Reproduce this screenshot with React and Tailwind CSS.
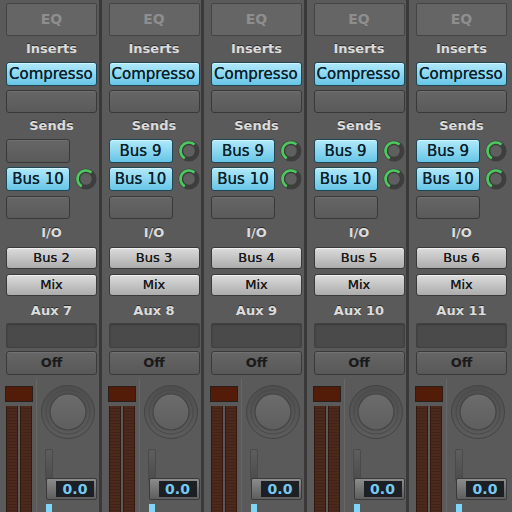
import React from "react";

const STRIPS = [
  { sends: [null, "Bus 10"], io: "Bus 2", aux: "Aux 7" },
  { sends: ["Bus 9", "Bus 10"], io: "Bus 3", aux: "Aux 8" },
  { sends: ["Bus 9", "Bus 10"], io: "Bus 4", aux: "Aux 9" },
  { sends: ["Bus 9", "Bus 10"], io: "Bus 5", aux: "Aux 10" },
  { sends: ["Bus 9", "Bus 10"], io: "Bus 6", aux: "Aux 11" },
];

const font = { fontFamily: '"DejaVu Sans", "Liberation Sans", sans-serif' };

function Label({ children, h }) {
  return (
    <div
      className={`flex items-center justify-center font-bold text-[13px] text-[#dcdcdc] [text-shadow:0_-1px_0_#2e2e2e] ${h}`}
    >
      {children}
    </div>
  );
}

function EmptySlot({ className = "" }) {
  return (
    <div
      className={`rounded-[3px] border border-[#383838] bg-linear-to-b from-[#666666] to-[#5a5a5a] shadow-[inset_0_1px_0_#707070] ${className}`}
    />
  );
}

function CyanSlot({ children, className = "", size = "text-[15px]" }) {
  return (
    <div
      className={`flex items-center justify-center overflow-hidden whitespace-nowrap rounded-[3px] border border-[#1e4756] bg-linear-to-b from-[#b0e9fa] to-[#66c5e6] shadow-[inset_0_1px_0_#d4f4ff] text-[#0b212b] [text-shadow:0_0_0.4px_#0b212b] ${size} ${className}`}
    >
      {children}
    </div>
  );
}

function GrayButton({ children, className = "" }) {
  return (
    <div
      className={`flex items-center justify-center rounded-[3px] border border-[#3a3a3a] bg-linear-to-b from-[#dcdcdc] to-[#acacac] text-[13px] text-[#1a1a1a] [text-shadow:0_0_0.4px_#1a1a1a] shadow-[inset_0_1px_0_#f0f0f0] ${className}`}
    >
      {children}
    </div>
  );
}

function SendKnob() {
  return (
    <svg width="22" height="22" viewBox="0 0 22 22">
      <circle cx="11" cy="11" r="10.5" fill="#3e3e3e" />
      <circle cx="11" cy="11" r="6.3" fill="#5f5f5f" stroke="#353535" strokeWidth="0.8" />
      <path
        d="M6.75 18.36 A8.5 8.5 0 1 1 16.46 4.49"
        fill="none"
        stroke="#4cc95e"
        strokeWidth="2.6"
      />
    </svg>
  );
}

function BigKnob() {
  return (
    <svg width="54" height="54" viewBox="0 0 54 54">
      <defs>
        <linearGradient id="ring" x1="0" y1="0" x2="0" y2="1">
          <stop offset="0" stopColor="#4e4e4e" />
          <stop offset="1" stopColor="#5c5c5c" />
        </linearGradient>
        <linearGradient id="cap" x1="0" y1="0" x2="0" y2="1">
          <stop offset="0" stopColor="#6c6c6c" />
          <stop offset="1" stopColor="#5e5e5e" />
        </linearGradient>
      </defs>
      <circle cx="27" cy="27" r="26.5" fill="url(#ring)" stroke="#444" strokeWidth="1" />
      <circle cx="27" cy="27" r="22" fill="none" stroke="#4a4a4a" strokeWidth="1" />
      <circle cx="27" cy="27" r="18" fill="url(#cap)" stroke="#444" strokeWidth="1.2" />
    </svg>
  );
}

function Strip({ s }) {
  return (
    <div className="flex h-[512px] w-[102.5px] shrink-0 flex-col border-l-[3px] border-[#393939] bg-[#5a5a5a] pl-[7px] pr-[1.5px] pt-[3px]">
      <div className="flex h-[33px] items-center justify-center rounded-[2px] border border-[#444444] bg-[#656565] text-[14px] font-bold text-[#8e8e8e]">
        EQ
      </div>
      <Label h="h-[26px]">Inserts</Label>
      <CyanSlot className="h-[24px] justify-start pl-[2px]">Compresso</CyanSlot>
      <EmptySlot className="mt-[4px] h-[23px]" />
      <Label h="h-[26px]">Sends</Label>
      {s.sends.map((b, i) => (
        <div key={i} className={`flex h-[24px] items-center justify-between ${i === 1 ? "mt-[4px]" : ""}`}>
          {b ? <CyanSlot className="h-[24px] w-[64px]">{b}</CyanSlot> : <EmptySlot className="h-[24px] w-[64px]" />}
          {b ? <SendKnob /> : null}
        </div>
      ))}
      <EmptySlot className="mt-[5px] h-[23px] w-[64px]" />
      <Label h="h-[28px]">I/O</Label>
      <GrayButton className="h-[22px]">{s.io}</GrayButton>
      <GrayButton className="mt-[5px] h-[22px]">Mix</GrayButton>
      <Label h="h-[27px] pt-[2px]">{s.aux}</Label>
      <div className="h-[25px] rounded-[2px] border border-[#404040] bg-[#4a4a4a] shadow-[inset_0_1px_2px_#3a3a3a]" />
      <div className="mt-[3px] flex h-[24px] items-center justify-center rounded-[3px] border border-[#3a3a3a] bg-linear-to-b from-[#666666] to-[#585858] text-[13px] font-bold text-[#1a1a1a] shadow-[inset_0_1px_0_#727272]">
        Off
      </div>
      <div className="-ml-[1px] flex flex-1">
        <div className="flex w-[28px] flex-col pt-[11px]">
          <div className="h-[16px] w-[28px] border border-[#2a1e1a] bg-[#521c08]" />
          <div className="mt-[4px] flex flex-1 gap-[2px] pl-[1px]">
            <div className="w-[12px] border-x border-[#33190f] bg-[image:repeating-linear-gradient(to_bottom,#4b2a1c_0px,#4b2a1c_2px,#41231a_2px,#41231a_3px)]" />
            <div className="w-[12px] border-x border-[#33190f] bg-[image:repeating-linear-gradient(to_bottom,#4b2a1c_0px,#4b2a1c_2px,#41231a_2px,#41231a_3px)]" />
          </div>
        </div>
        <div className="ml-[3px] mt-[4px] w-px bg-[#676767]" />
        <div className="relative ml-[4px] flex flex-col pt-[10px]">
          <BigKnob />
          <div className="ml-[4px] mt-[10px] h-[32px] w-[8px] rounded-t-[2px] border border-[#4a4a4a] bg-linear-to-b from-[#5e5e5e] to-[#4c4c4c]" />
          <div className="absolute left-[5px] top-[103px] h-[22px] w-[51px] rounded-[2px] border border-[#3a3a3a] bg-linear-to-b from-[#8c8c8c] to-[#5e5e5e] p-[2px] pl-[9px]">
            <div className="flex h-full items-center justify-center bg-[#1c2024] text-[14px] font-bold text-[#78c9f2]">
              0.0
            </div>
          </div>
          <div className="absolute left-[5px] top-[129px] h-[10px] w-[6px] bg-[#7fd6f6]" />
        </div>
      </div>
    </div>
  );
}

export default function App() {
  return (
    <div className="h-[512px] w-[512px] overflow-hidden bg-[#5a5a5a]" style={font}>
      <div className="-ml-[4px] flex">
        {STRIPS.map((s, i) => (
          <Strip key={i} s={s} />
        ))}
      </div>
    </div>
  );
}
